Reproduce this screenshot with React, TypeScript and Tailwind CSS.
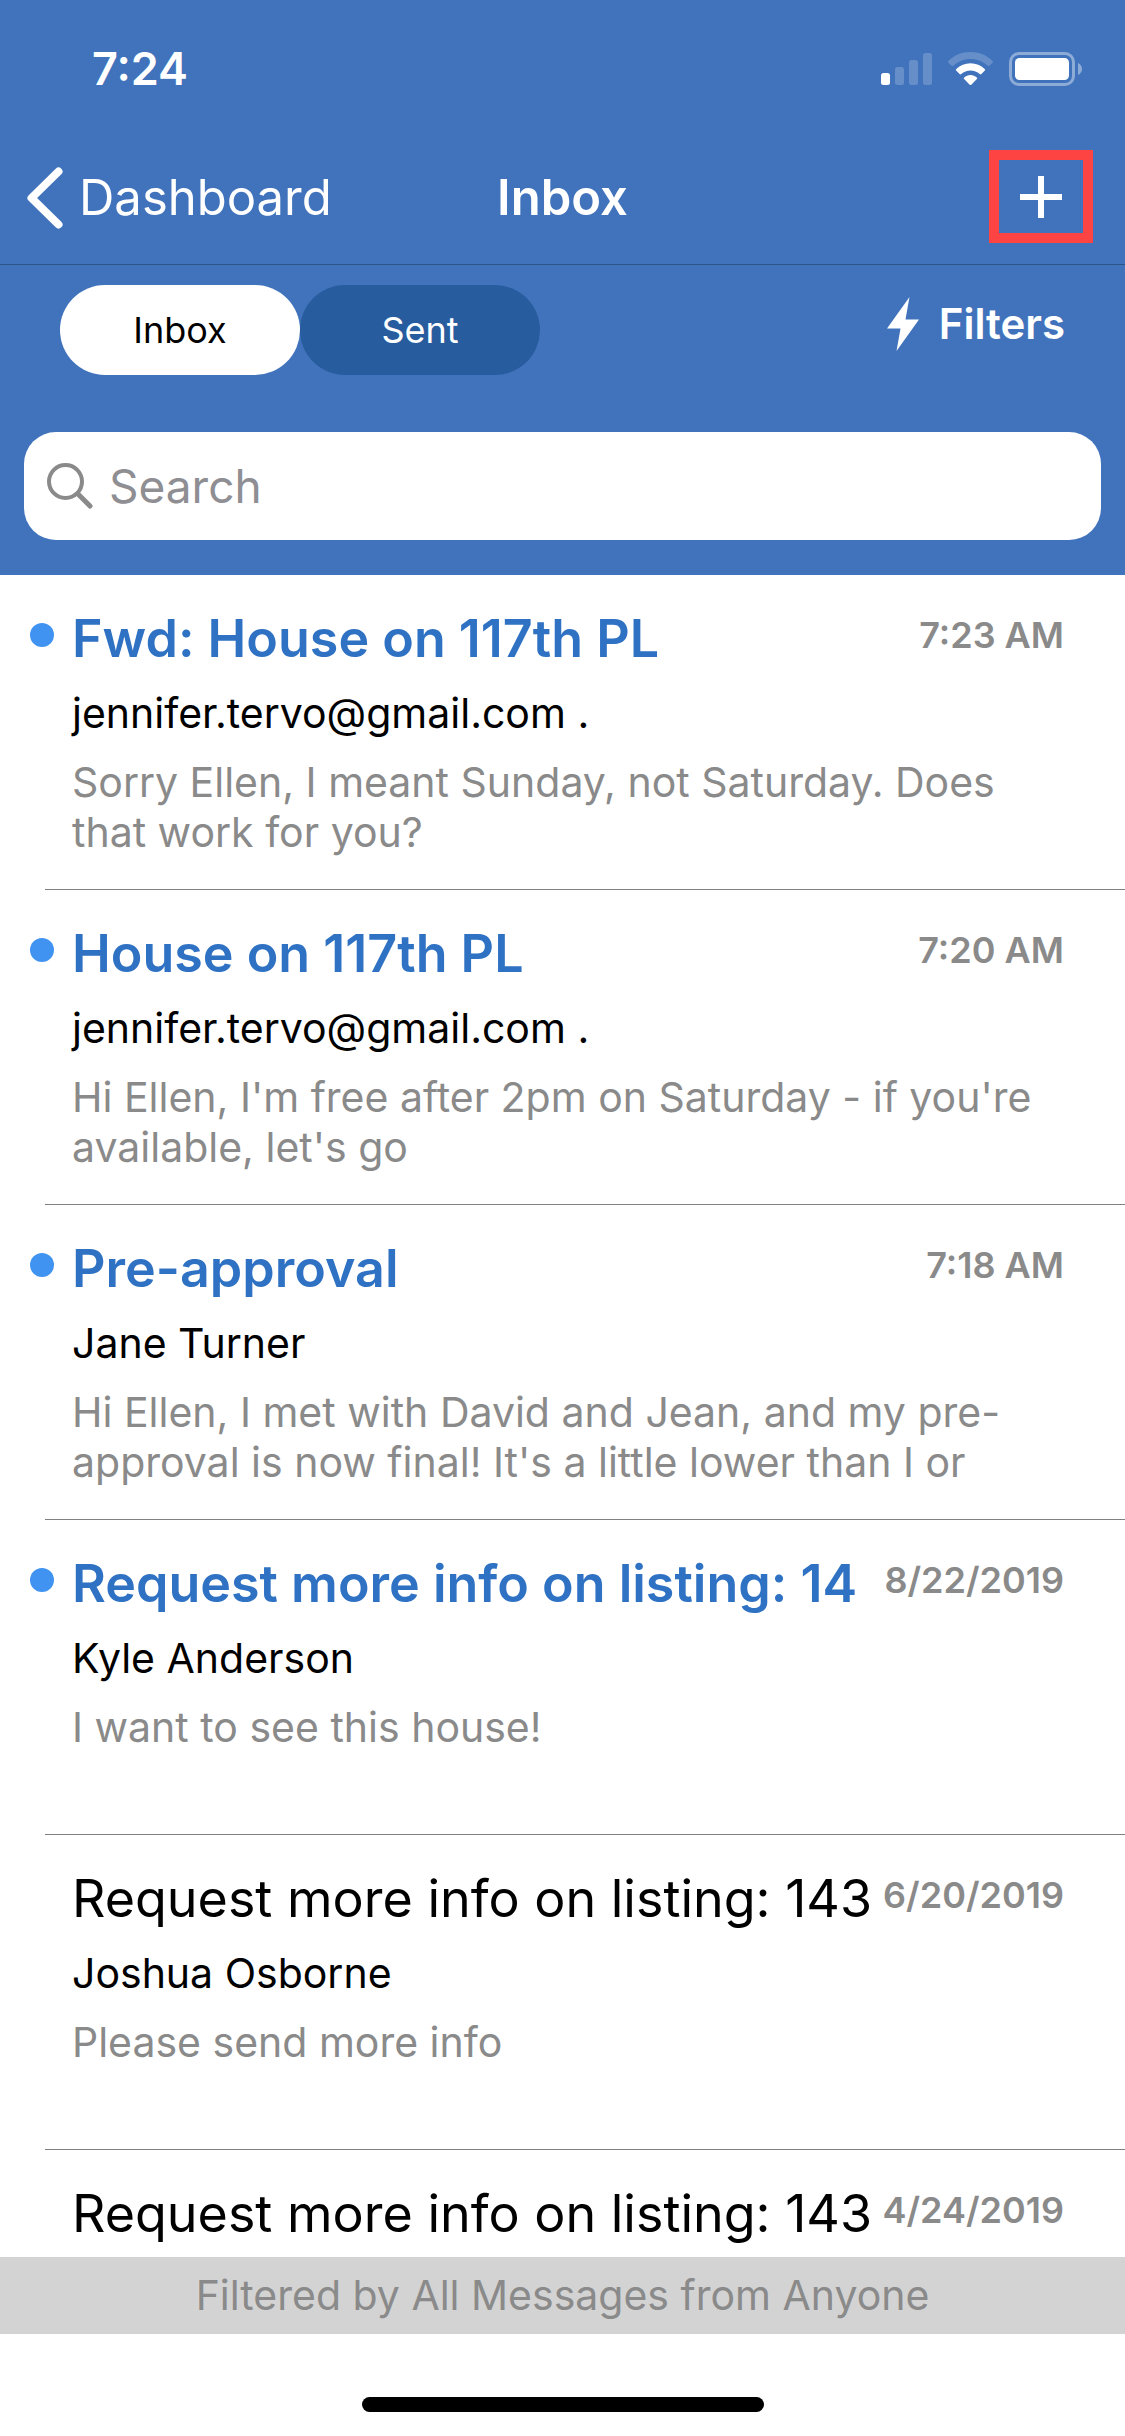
import React, { useState } from 'react';

interface Message {
  id: number;
  subject: string;
  from: string;
  preview: string;
  date: string;
  unread: boolean;
}

const messages: Message[] = [
  {
    id: 1,
    subject: 'Fwd: House on 117th PL',
    from: 'jennifer.tervo@gmail.com .',
    preview: 'Sorry Ellen, I meant Sunday, not Saturday. Does that work for you?',
    date: '7:23 AM',
    unread: true,
  },
  {
    id: 2,
    subject: 'House on 117th PL',
    from: 'jennifer.tervo@gmail.com .',
    preview: "Hi Ellen, I'm free after 2pm on Saturday - if you're available, let's go",
    date: '7:20 AM',
    unread: true,
  },
  {
    id: 3,
    subject: 'Pre-approval',
    from: 'Jane Turner',
    preview: "Hi Ellen, I met with David and Jean, and my pre-approval is now final! It's a little lower than I or",
    date: '7:18 AM',
    unread: true,
  },
  {
    id: 4,
    subject: 'Request more info on listing: 14',
    from: 'Kyle Anderson',
    preview: 'I want to see this house!',
    date: '8/22/2019',
    unread: true,
  },
  {
    id: 5,
    subject: 'Request more info on listing: 143',
    from: 'Joshua Osborne',
    preview: 'Please send more info',
    date: '6/20/2019',
    unread: false,
  },
  {
    id: 6,
    subject: 'Request more info on listing: 143',
    from: '',
    preview: '',
    date: '4/24/2019',
    unread: false,
  },
];

function StatusBar() {
  return (
    <div className="flex h-[132px] items-start justify-between pt-[42px] pr-[43px] pl-[92px]">
      <span className="text-[45px] leading-[54px] font-semibold">7:24</span>
      <div className="flex gap-4 pt-[10px]">
        <svg width="51" height="34" viewBox="0 0 51 34" fill="white">
          <rect x="0" y="21" width="9" height="12" rx="2.5" />
          <rect x="14" y="15" width="9" height="18" rx="2.5" opacity="0.2" />
          <rect x="28" y="8" width="9" height="25" rx="2.5" opacity="0.2" />
          <rect x="42" y="1" width="9" height="32" rx="2.5" opacity="0.2" />
        </svg>
        <svg width="45" height="34" viewBox="0 0 45 34" fill="white">
          <path d="M22.500 0C31 0 39 3.300 44.600 8.900c.6.6.6 1.200 0 1.800l-3.200 3.100c-.5.5-1.100.5-1.600 0C35 9.500 29 7 22.500 7S10 9.500 5.200 13.800c-.5.5-1.100.5-1.600 0L.4 10.700c-.6-.6-.6-1.200 0-1.800C6 3.300 14 0 22.500 0Z" opacity="0.2" />
          <path d="M22.500 11.300c5.400 0 10.400 2.100 14.200 5.600.6.5.6 1.200.1 1.700l-3.400 3.400c-.5.5-1 .5-1.600.1a14 14 0 0 0-18.600 0c-.6.4-1.100.4-1.600-.1l-3.400-3.400c-.5-.5-.5-1.200.1-1.700 3.800-3.500 8.800-5.600 14.200-5.600Z" />
          <path d="M22.500 23c2.400 0 4.600.9 6.300 2.400.6.5.6 1.100.1 1.600l-5.600 5.700c-.5.5-1.100.5-1.600 0L16.100 27c-.5-.5-.5-1.100.1-1.600 1.700-1.500 3.900-2.400 6.300-2.400Z" />
        </svg>
        <svg width="73" height="34" viewBox="0 0 73 34" fill="white">
          <rect x="1.500" y="1.500" width="63" height="31" rx="8.500" fill="none" stroke="white" strokeWidth="3" opacity="0.4" />
          <rect x="6" y="6" width="54" height="22" rx="4.500" />
          <path d="M69 11c2.500 1 4 3.400 4 6s-1.500 5-4 6Z" opacity="0.4" />
        </svg>
      </div>
    </div>
  );
}

function NavBar() {
  return (
    <nav className="grid grid-cols-[1fr_auto_1fr] items-center border-b border-[#2d5487] px-[27px] pt-[18px] pb-[21px]">
      <a href="#dashboard" className="flex items-center gap-4 pt-[3px] text-[49px] leading-[60px]">
        <svg width="36" height="62" viewBox="0 0 36 62" fill="none" stroke="white" strokeWidth="8" strokeLinecap="round" strokeLinejoin="round">
          <path d="M31.500 4.500 4.500 31l27 26.500" />
        </svg>
        Dashboard
      </a>
      <h1 className="pt-[3px] text-[49px] leading-[60px] font-semibold">Inbox</h1>
      <button
        aria-label="New message"
        className="mr-[5px] flex h-[93px] w-[104px] items-center justify-center justify-self-end border-[10px] border-[#fe4343]"
      >
        <svg width="42" height="42" viewBox="0 0 42 42" fill="none" stroke="white" strokeWidth="6">
          <path d="M21 0v42M0 21h42" />
        </svg>
      </button>
    </nav>
  );
}

function MessageRow({ message }: { message: Message }) {
  return (
    <li>
      <a href={`#message-${message.id}`} className="flex pt-8 pr-[61px] pb-8 pl-[30px]">
        <span className={`mt-4 mr-[18px] size-6 shrink-0 rounded-full ${message.unread ? 'bg-[#4193f1]' : ''}`} />
        <div className="min-w-0 flex-1">
          <div className="flex items-start justify-between">
            <h2
              className={`overflow-hidden text-[52px] leading-[64px] whitespace-nowrap ${
                message.unread ? 'font-semibold text-[#2f72c4]' : 'text-black'
              }`}
            >
              {message.subject}
            </h2>
            <time className="shrink-0 text-[36px] leading-[56px] font-semibold text-[#8a8a8a]">{message.date}</time>
          </div>
          <p className="mt-[17px] min-h-[50px] text-[41px] leading-[50px] text-black">{message.from}</p>
          <p className="mt-[19px] min-h-[100px] text-[41px] leading-[50px] text-[#8a8a8a]">{message.preview}</p>
        </div>
      </a>
      <div className="ml-[45px] h-px bg-[#808080]" />
    </li>
  );
}

export default function App() {
  const [tab, setTab] = useState<'inbox' | 'sent'>('inbox');

  return (
    <div className="flex h-screen flex-col bg-white font-['Inter',sans-serif]">
      <header className="shrink-0 bg-[#4073bc] text-white">
        <StatusBar />
        <NavBar />

        {/* Mailbox switch and filters */}
        <div className="flex items-start justify-between px-[60px] pt-5">
          <div className="flex">
            <button
              onClick={() => setTab('inbox')}
              className={`h-[90px] w-60 rounded-[45px] text-[36px] ${tab === 'inbox' ? 'bg-white text-black' : 'bg-[#275c9e] text-white'}`}
            >
              Inbox
            </button>
            <button
              onClick={() => setTab('sent')}
              className={`h-[90px] w-60 rounded-[45px] text-[36px] ${tab === 'sent' ? 'bg-white text-black' : 'bg-[#275c9e] text-white'}`}
            >
              Sent
            </button>
          </div>
          <button className="flex items-center gap-5 pt-3 text-[42px] leading-[50px] font-semibold">
            <svg width="32" height="54" viewBox="0 0 32 54" fill="white">
              <path d="M22.500 0 0 31.500h13.500L9.500 54 32 22.500H18.500Z" />
            </svg>
            Filters
          </button>
        </div>

        <div className="px-6 pt-[57px] pb-[35px]">
          <label className="flex h-[108px] items-center gap-4 rounded-[32px] bg-white pr-6 pl-[23px]">
            <svg width="46" height="46" viewBox="0 0 46 46" fill="none" stroke="#8a8a8a" strokeLinecap="round">
              <circle cx="18.500" cy="18.500" r="16.500" strokeWidth="4" />
              <path d="M31 31 43 43" strokeWidth="5" />
            </svg>
            <input
              type="text"
              aria-label="Search"
              placeholder="Search"
              className="min-w-0 flex-1 bg-transparent text-[46px] text-black outline-none placeholder:text-[#8e8e93]"
            />
          </label>
        </div>
      </header>

      <ul className="min-h-0 flex-1 overflow-hidden">
        {messages.map((message) => (
          <MessageRow key={message.id} message={message} />
        ))}
      </ul>

      <footer className="shrink-0">
        <p className="bg-[#d3d3d3] py-[13px] text-center text-[41px] leading-[51px] text-[#8a8a8a]">
          Filtered by All Messages from Anyone
        </p>
        <div className="flex justify-center pt-[63px] pb-6">
          <div className="h-[15px] w-[402px] rounded-full bg-black" />
        </div>
      </footer>
    </div>
  );
}
